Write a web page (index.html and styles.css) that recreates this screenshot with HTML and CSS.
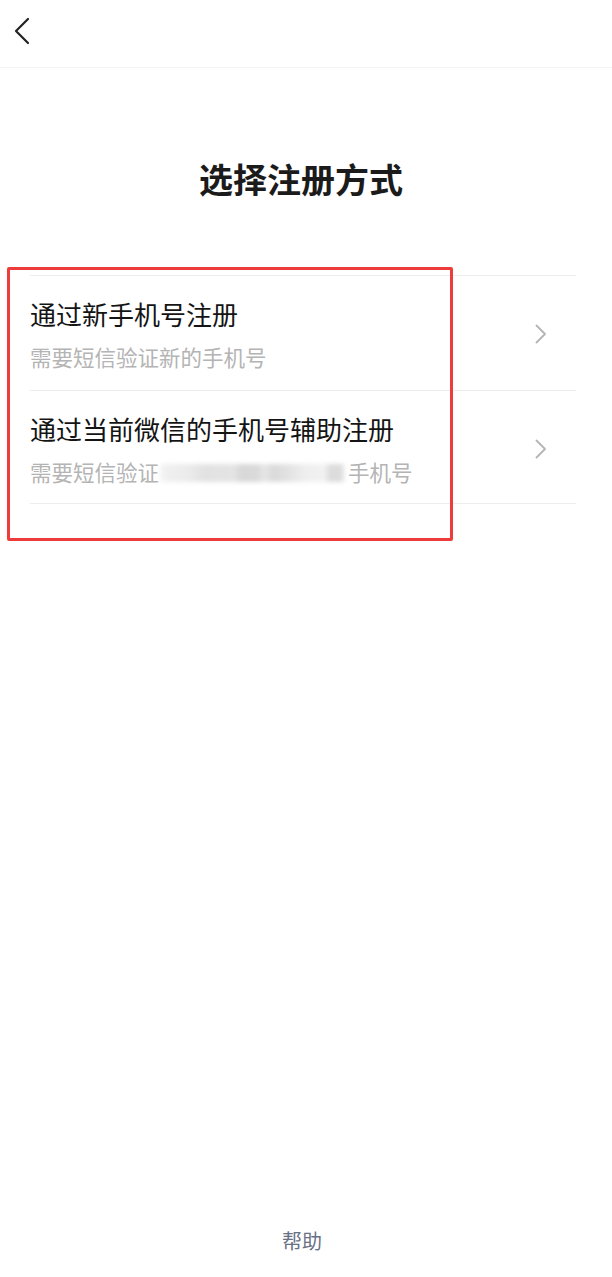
FILE: index.html
```html
<!DOCTYPE html>
<html lang="zh-CN">
<head>
<meta charset="utf-8">
<title>选择注册方式</title>
<link rel="stylesheet" href="styles.css">
</head>
<body>
<div class="page">
  <header class="topbar">
    <svg class="back" width="18" height="28" viewBox="0 0 18 28"><path d="M15 2 L3 14 L15 26" fill="none" stroke="#222" stroke-width="2.2" stroke-linecap="round" stroke-linejoin="round"/></svg>
  </header>
  <h1 class="title">选择注册方式</h1>
  <div class="list-wrap">
    <ul class="list">
      <li class="row">
        <div class="texts">
          <div class="row-title">通过新手机号注册</div>
          <div class="row-sub">需要短信验证新的手机号</div>
        </div>
        <svg class="chev" width="12" height="20" viewBox="0 0 12 20"><path d="M1.5 1.5 L10 10 L1.5 18.5" fill="none" stroke="#b5b5b5" stroke-width="1.8" stroke-linecap="round" stroke-linejoin="round"/></svg>
      </li>
      <li class="row">
        <div class="texts">
          <div class="row-title">通过当前微信的手机号辅助注册</div>
          <div class="row-sub">需要短信验证<span class="mosaic"></span>手机号</div>
        </div>
        <svg class="chev" width="12" height="20" viewBox="0 0 12 20"><path d="M1.5 1.5 L10 10 L1.5 18.5" fill="none" stroke="#b5b5b5" stroke-width="1.8" stroke-linecap="round" stroke-linejoin="round"/></svg>
      </li>
    </ul>
    <div class="highlight"></div>
  </div>
  <div class="help">帮助</div>
</div>
</body>
</html>
```
FILE: styles.css
```css
html, body {
  margin: 0;
  padding: 0;
  background: #ffffff;
}
body {
  font-family: "Noto Sans CJK SC", "Noto Sans", sans-serif;
}
.page {
  min-height: 1277px;
  display: flex;
  flex-direction: column;
}
.topbar {
  height: 68px;
  border-bottom: 1px solid #f3f3f3;
  box-sizing: border-box;
  display: flex;
  align-items: flex-start;
  padding: 17px 0 0 13px;
}
.back {
  display: block;
}
.title {
  margin: 88px 0 0;
  padding-right: 10px;
  font-size: 34px;
  line-height: 46px;
  font-weight: 700;
  text-align: center;
  color: #1b1b1b;
}
.list-wrap {
  position: relative;
  margin-top: 73px;
}
.list {
  list-style: none;
  margin: 0 36px 0 30px;
  padding: 0;
  border-bottom: 1px solid #ededed;
}
.row {
  display: flex;
  align-items: center;
  justify-content: space-between;
  border-top: 1px solid #ededed;
  padding: 20px 29px 18px 0;
}
.row + .row {
  padding-bottom: 16px;
}
.row-title {
  font-size: 26px;
  line-height: 36px;
  color: #141414;
}
.row-sub {
  margin-top: 10px;
  font-size: 21.5px;
  line-height: 30px;
  height: 30px;
  color: #b4b4b4;
  white-space: nowrap;
}
.mosaic {
  display: inline-block;
  vertical-align: top;
  width: 186px;
  height: 18px;
  margin: 7px 3px 0 0;
  filter: blur(2px);
  background: linear-gradient(to right,
    #fafafa 0, #f0f0f0 6px, #ebebeb 30px, #e2e2e2 45px, #e4e4e4 75px,
    #d8d8d8 82px, #d9d9d9 98px, #e6e6e6 105px, #dadada 115px, #e3e3e3 130px,
    #eeeeee 145px, #f2f2f2 165px, #dcdcdc 171px, #dcdcdc 182px, #f5f5f5 186px);
}
.chev {
  display: block;
  flex: none;
}
.highlight {
  position: absolute;
  left: 7px;
  top: -8px;
  width: 446px;
  height: 274px;
  border: 3px solid #ee3b3b;
  border-radius: 2px;
  box-sizing: border-box;
  pointer-events: none;
}
.help {
  margin-top: auto;
  padding: 0 8px 22px 0;
  text-align: center;
  font-size: 20px;
  line-height: 28px;
  color: #697186;
}
```
